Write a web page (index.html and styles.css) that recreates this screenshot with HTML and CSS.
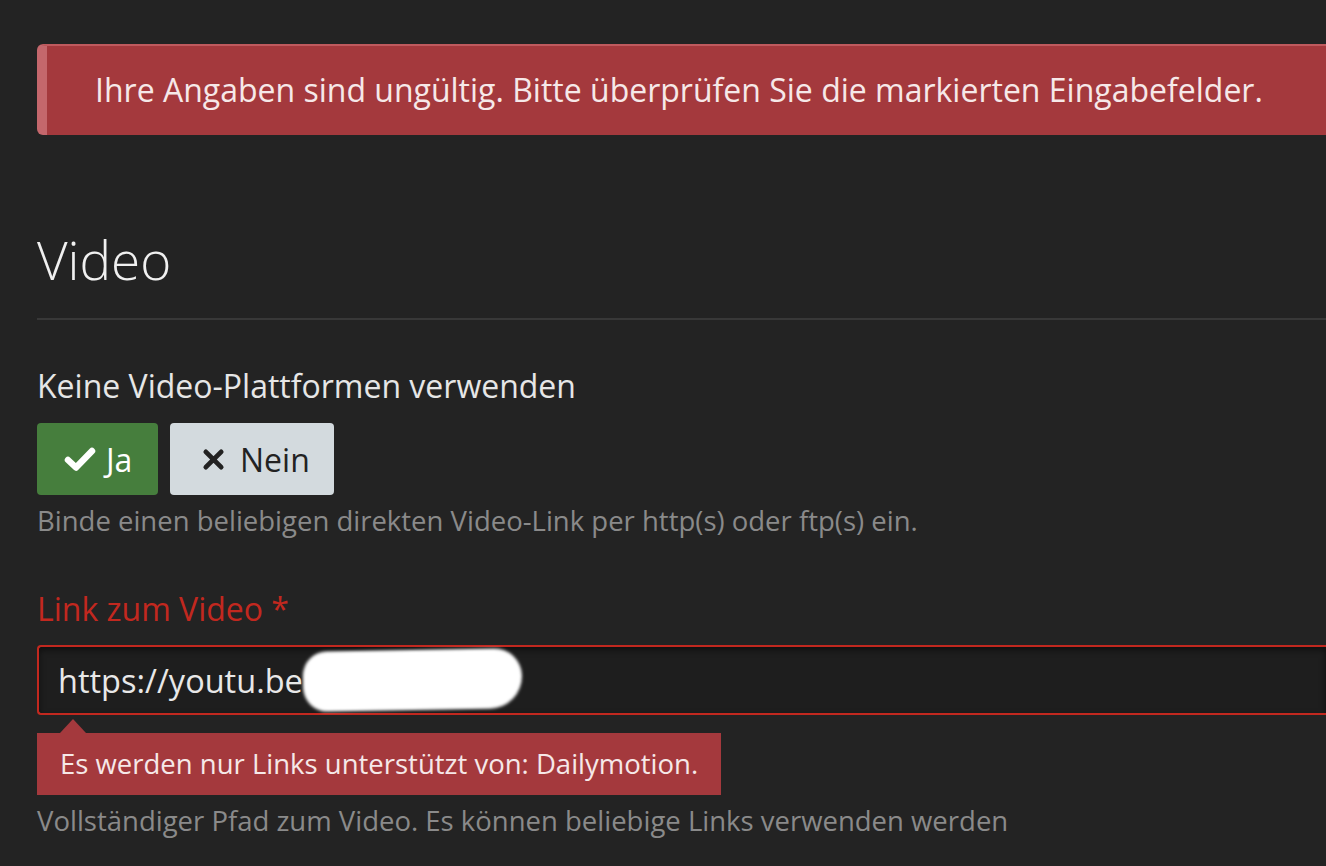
FILE: index.html
```html
<!DOCTYPE html>
<html lang="de">
<head>
    <meta charset="UTF-8">
    <title>Video</title>
    <link rel="stylesheet" href="styles.css">
</head>
<body>
    <div class="page">
        <div class="alert">Ihre Angaben sind ungültig. Bitte überprüfen Sie die markierten Eingabefelder.</div>

        <h2 class="section-title">Video</h2>

        <div class="field">
            <label class="field-label">Keine Video-Plattformen verwenden</label>
            <div class="toggle">
                <button class="btn btn-yes">
                    <svg class="icon" viewBox="0 0 32 28" width="32" height="28"><path d="M4 15 L12 22.5 L28 6" fill="none" stroke="#fff" stroke-width="6.5" stroke-linecap="round" stroke-linejoin="round"/></svg>
                    Ja
                </button>
                <button class="btn btn-no">
                    <svg class="icon" viewBox="0 0 24 24" width="23" height="23"><path d="M4 4 L20 20 M20 4 L4 20" fill="none" stroke="#222" stroke-width="5" stroke-linecap="round"/></svg>
                    Nein
                </button>
            </div>
            <div class="help">Binde einen beliebigen direkten Video-Link per http(s) oder ftp(s) ein.</div>
        </div>

        <div class="field field-error">
            <label class="field-label">Link zum Video *</label>
            <div class="input"><span>https://youtu.be</span><span class="blur"></span></div>
            <div class="error-tip">Es werden nur Links unterstützt von: Dailymotion.</div>
            <div class="help">Vollständiger Pfad zum Video. Es können beliebige Links verwenden werden</div>
        </div>
    </div>
</body>
</html>
```

FILE: styles.css
```css
body { margin: 0; background: #232323; font-family: "Open Sans", "Liberation Sans", sans-serif; color: #e6e6e6; overflow: hidden; }
.page { padding: 44px 0 0 37px; }

.alert { background: #a4393d; color: #f6e8e8; font-size: 32px; line-height: 88px; height: 91px; box-sizing: border-box; padding-left: 48px; margin-right: -20px; border-left: 10px solid #c4676c; border-top: 2px solid #bf5a5e; border-radius: 6px 0 0 6px; white-space: nowrap; }

.section-title { font-weight: 300; font-size: 53px; color: #f0f0f0; margin: 89px 0 0; line-height: 72px; padding-bottom: 22px; border-bottom: 2px solid #383838; }

.field { margin-top: 44px; }
.field-label { display: block; font-size: 32px; line-height: 44px; margin-bottom: 15px; }
.toggle { display: flex; gap: 12px; }
.btn { font-family: inherit; font-size: 32px; height: 72px; border: none; border-radius: 4px; display: flex; align-items: center; gap: 10px; padding: 0 0 0 27px; }
.btn-yes { background: #467e3d; color: #fff; width: 121px; }
.btn-no { background: #d3dade; color: #222; width: 164px; padding-left: 32px; gap: 15px; }
.help { color: #8a8a8a; font-size: 27.5px; margin-top: 7px; line-height: 38px; }

.field-error { margin-top: 47px; }
.field-error .field-label { color: #c2281f; margin-bottom: 14px; }
.input { height: 70px; box-sizing: border-box; border: 2px solid #c2281f; border-right: none; border-radius: 4px 0 0 4px; background: #1e1e1e; box-shadow: inset 0 3px 6px rgba(0,0,0,0.5); display: flex; align-items: center; padding-left: 19px; font-size: 32.5px; color: #e8e8e8; }
.blur { display: inline-block; width: 219px; height: 60px; background: #fff; border-radius: 30px 34px 40px 30px; filter: blur(1.5px); transform: rotate(-1deg); }

.error-tip { position: relative; display: inline-block; margin-top: 18px; background: #a4393d; color: #f6e8e8; font-size: 27.5px; line-height: 62px; padding: 0 23px; }
.error-tip::before { content: ""; position: absolute; left: 23px; top: -14px; border: 13px solid transparent; border-top: none; border-bottom: 14px solid #a4393d; }
.field-error .help { margin-top: 7px; }
```
